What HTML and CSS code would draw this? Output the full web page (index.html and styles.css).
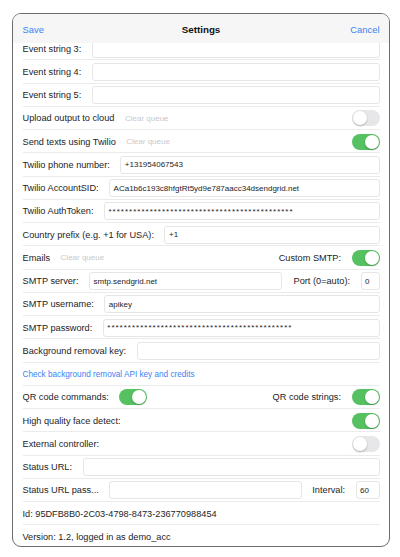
FILE: index.html
```html
<!DOCTYPE html>
<html>
<head>
<meta charset="utf-8">
<link rel="stylesheet" href="styles.css">
</head>
<body>
<div class="sheet">
  <div class="bar">
    <span class="btn">Save</span>
    <span class="title">Settings</span>
    <span class="btn right">Cancel</span>
  </div>
  <div class="scroll">
    <div class="list">
      <div class="row"><span>Event string 3:</span><span class="field"></span></div>
      <div class="row"><span>Event string 4:</span><span class="field"></span></div>
      <div class="row"><span>Event string 5:</span><span class="field"></span></div>
      <div class="row"><span>Upload output to cloud</span><span class="muted">Clear queue</span><span class="spacer"></span><span class="toggle"></span></div>
      <div class="row"><span>Send texts using Twilio</span><span class="muted">Clear queue</span><span class="spacer"></span><span class="toggle on"></span></div>
      <div class="row"><span>Twilio phone number:</span><span class="field">+131954067543</span></div>
      <div class="row"><span>Twilio AccountSID:</span><span class="field">ACa1b6c193c8hfgtRt5yd9e787aacc34dsendgrid.net</span></div>
      <div class="row"><span>Twilio AuthToken:</span><span class="field stars">*********************************************</span></div>
      <div class="row"><span>Country prefix (e.g. +1 for USA):</span><span class="field">+1</span></div>
      <div class="row"><span>Emails</span><span class="muted">Clear queue</span><span class="spacer"></span><span>Custom SMTP:</span><span class="toggle on"></span></div>
      <div class="row"><span>SMTP server:</span><span class="field">smtp.sendgrid.net</span><span class="gap">Port (0=auto):</span><span class="field port">0</span></div>
      <div class="row"><span>SMTP username:</span><span class="field">apikey</span></div>
      <div class="row"><span>SMTP password:</span><span class="field stars">*********************************************</span></div>
      <div class="row"><span>Background removal key:</span><span class="field"></span></div>
      <div class="row"><span class="link">Check background removal API key and credits</span></div>
      <div class="row"><span>QR code commands:</span><span class="toggle on"></span><span class="spacer"></span><span>QR code strings:</span><span class="toggle on"></span></div>
      <div class="row"><span>High quality face detect:</span><span class="spacer"></span><span class="toggle on"></span></div>
      <div class="row"><span>External controller:</span><span class="spacer"></span><span class="toggle"></span></div>
      <div class="row"><span>Status URL:</span><span class="field"></span></div>
      <div class="row"><span>Status URL pass...</span><span class="field"></span><span>Interval:</span><span class="field int">60</span></div>
      <div class="row"><span>Id: 95DFB8B0-2C03-4798-8473-236770988454</span></div>
      <div class="row last"><span>Version: 1.2, logged in as demo_acc</span></div>
    </div>
  </div>
</div>
</body>
</html>
```
FILE: styles.css
```css
* { box-sizing: border-box; margin: 0; padding: 0; }
html, body { background: #fff; }
body {
  font-family: "Liberation Sans", Arial, sans-serif;
  color: #1d1d1f;
}
.sheet {
  margin: 13px 0 0 12px;
  width: 378px;
  height: 534px;
  border: 1.5px solid #6c6c6c;
  border-radius: 9px;
  overflow: hidden;
  display: flex;
  flex-direction: column;
  background: #fff;
}
.bar {
  height: 28.5px;
  flex: none;
  background: #f6f6f6;
  display: grid;
  grid-template-columns: 1fr auto 1fr;
  align-items: center;
  padding: 2px 9.5px 0;
  font-size: 9.4px;
}
.btn { color: #3a83f6; }
.btn.right { justify-self: end; }
.title { font-weight: bold; color: #111; font-size: 9.8px; }
.scroll {
  flex: 1;
  overflow: hidden;
  padding: 0 9.5px;
}
.list { margin-top: -5.5px; }
.row {
  height: 23.25px;
  border-bottom: 1px solid #ebebeb;
  display: flex;
  align-items: center;
  gap: 10.5px;
  padding-top: 1px;
  font-size: 9.2px;
  white-space: nowrap;
}
.row.last { border-bottom: none; }
.field {
  flex: 1;
  min-width: 0;
  height: 18px;
  border: 1px solid #e6e6e6;
  border-radius: 3px;
  padding: 0 3.5px;
  font-size: 8px;
  display: flex;
  align-items: center;
  overflow: hidden;
  color: #1d1d1f;
}
.field.stars { letter-spacing: 1px; }
.field.port { flex: none; width: 19px; }
.field.int { flex: none; width: 24px; }
.gap { margin-left: 1.5px; }
.spacer { flex: 1; }
.muted { color: #c9c9cd; font-size: 8px; }
.link { color: #3a83f6; font-size: 8.2px; }
.toggle {
  flex: none;
  position: relative;
  width: 28px;
  height: 16px;
  border-radius: 8px;
  background: #e7e7e9;
}
.toggle.on { background: #55c160; }
.toggle::after {
  content: "";
  position: absolute;
  top: 1px;
  left: 1px;
  width: 14px;
  height: 14px;
  border-radius: 50%;
  background: #fff;
  box-shadow: 0 1px 2px rgba(0, 0, 0, 0.25);
}
.toggle.on::after { left: 13px; }
```
